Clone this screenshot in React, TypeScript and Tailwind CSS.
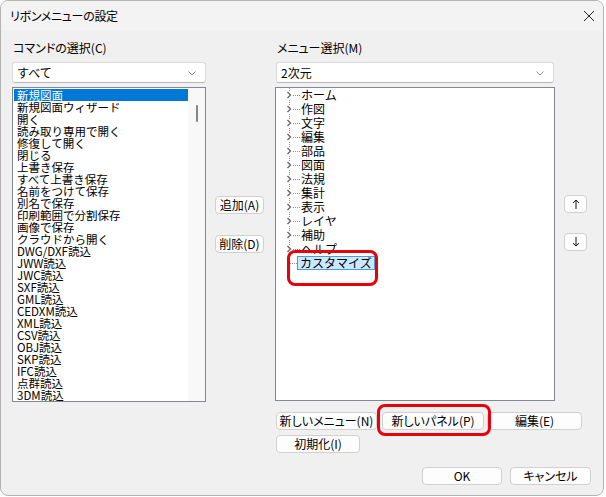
import React from 'react';

const commands = [
  '新規図面', '新規図面ウィザード', '開く', '読み取り専用で開く', '修復して開く', '閉じる', '上書き保存',
  'すべて上書き保存', '名前をつけて保存', '別名で保存', '印刷範囲で分割保存', '画像で保存', 'クラウドから開く',
  'DWG/DXF読込', 'JWW読込', 'JWC読込', 'SXF読込', 'GML読込', 'CEDXM読込', 'XML読込', 'CSV読込', 'OBJ読込',
  'SKP読込', 'IFC読込', '点群読込', '3DM読込',
];

const menus = ['ホーム', '作図', '文字', '編集', '部品', '図面', '法規', '集計', '表示', 'レイヤ', '補助', 'ヘルプ'];

function Chevron() {
  return (
    <svg width="8" height="5" viewBox="0 0 8 5" className="mr-[4px] mt-[1px] shrink-0">
      <path d="M0.5 0.5 L4 4 L7.5 0.5" fill="none" stroke="#808080" strokeWidth="0.9" />
    </svg>
  );
}

function Combo({ value, width }: { value: string; width: string }) {
  return (
    <div className={`${width} h-[21px] bg-white border border-[#dadada] border-b-[#b8b8b8] rounded-[3px] flex items-center justify-between pl-[4px] pr-[5px]`}>
      <span className="text-[12px] leading-[14px]">{value}</span>
      <Chevron />
    </div>
  );
}

function Btn({ children, className = '' }: { children: React.ReactNode; className?: string }) {
  return (
    <div className={`h-[18px] bg-[#fdfdfd] border border-[#d0d0d0] rounded-[4px] flex items-center justify-center text-[12px] leading-[14px] text-black ${className}`}>
      {children}
    </div>
  );
}

function TreeRow({ label }: { label: string }) {
  return (
    <div className="h-[14px] flex items-center">
      <svg width="25" height="14" viewBox="0 0 25 14" className="shrink-0">
        <line x1="13.5" y1="0" x2="13.5" y2="14" stroke="#909090" strokeWidth="1" strokeDasharray="1 1" />
        <line x1="17" y1="7.5" x2="24" y2="7.5" stroke="#909090" strokeWidth="1" strokeDasharray="1 1" />
        <rect x="10" y="3" width="6" height="8" fill="#fff" />
        <path d="M11.5 4 L14.5 7 L11.5 10" fill="none" stroke="#6a6a6a" strokeWidth="1.4" />
      </svg>
      <span className="text-[12px] leading-[14px] whitespace-nowrap">{label}</span>
    </div>
  );
}

function Arrow({ up }: { up: boolean }) {
  return (
    <svg width="8" height="10" viewBox="0 0 8 10">
      {up ? (
        <path d="M4 1 V10 M1 4 L4 1 L7 4" fill="none" stroke="#111" strokeWidth="1" />
      ) : (
        <path d="M4 0 V9 M1 6 L4 9 L7 6" fill="none" stroke="#111" strokeWidth="1" />
      )}
    </svg>
  );
}

export default function App() {
  return (
    <div className="w-[606px] h-[497px] bg-white font-['Noto_Sans_CJK_JP',sans-serif] text-black">
      <div className="w-[604px] h-[496px] bg-[#f0f0f0] border border-[#b4b4b4] rounded-[8px] overflow-hidden flex flex-col">
        {/* title bar */}
        <div className="h-[30px] shrink-0 bg-[#f3f3f3] flex items-center justify-between pl-[9px] pr-[8px]">
          <span className="text-[12px] leading-[14px] [font-feature-settings:'palt'] tracking-[-0.3px]">リボンメニューの設定</span>
          <svg width="12" height="12" viewBox="0 0 12 12">
            <path d="M1 1 L11 11 M11 1 L1 11" stroke="#222" strokeWidth="1" />
          </svg>
        </div>

        {/* main row */}
        <div className="flex pl-[11px] pt-[9px]">
          {/* commands */}
          <div className="w-[194px] flex flex-col">
            <div className="h-[15px] text-[12px] leading-[15px] pl-[1px] [font-feature-settings:'palt']">コマンドの選択(C)</div>
            <div className="mt-[7px]">
              <Combo value="すべて" width="w-[194px]" />
            </div>
            <div className="mt-[4px] h-[315px] bg-white border border-[#828790] flex">
              <div className="flex-1 pl-[1px] pt-[1px]">
                {commands.map((c, i) => (
                  <div
                    key={c}
                    className={`h-[12px] text-[11.5px] leading-[12px] pl-[3px] whitespace-nowrap ${i === 0 ? 'bg-[#0078d7] text-white' : ''}`}
                  >
                    {c}
                  </div>
                ))}
              </div>
              <div className="w-[17px] bg-[#f8f8f8] flex justify-center pt-[17px]">
                <div className="w-[2px] h-[17px] bg-[#858585] rounded-full" />
              </div>
            </div>
          </div>

          {/* add / remove */}
          <div className="w-[69px] pl-[9px] pt-[156px] flex flex-col">
            <Btn className="w-[49px]">追加(A)</Btn>
            <Btn className="w-[49px] mt-[21px]">削除(D)</Btn>
          </div>

          {/* menu tree */}
          <div className="w-[280px] flex flex-col">
            <div className="h-[15px] text-[12px] leading-[15px] pl-[2px] [font-feature-settings:'palt']">メニュー選択(M)</div>
            <div className="mt-[7px] pl-[1px]">
              <Combo value="2次元" width="w-[278px]" />
            </div>
            <div className="mt-[4px] h-[314px] bg-white border border-[#828790] relative">
              {menus.map(m => (
                <TreeRow key={m} label={m} />
              ))}
              <div className="h-[14px] flex items-center">
                <svg width="21" height="14" viewBox="0 0 21 14" className="shrink-0">
                  <line x1="13.5" y1="0" x2="13.5" y2="7" stroke="#909090" strokeWidth="1" strokeDasharray="1 1" />
                  <line x1="14" y1="7.5" x2="21" y2="7.5" stroke="#909090" strokeWidth="1" strokeDasharray="1 1" />
                </svg>
                <span className="h-[14px] text-[12px] leading-[12px] px-[2px] bg-[#cce8ff] border border-[#4a9ee0] whitespace-nowrap">
                  カスタマイズ
                </span>
              </div>
              <div className="absolute left-[11px] top-[162px] w-[91px] h-[36px] border-[3px] border-[#e8000b] rounded-[8px]" />
            </div>
          </div>

          {/* up / down */}
          <div className="pl-[9px] pt-[155px] flex flex-col">
            <Btn className="w-[23px]"><Arrow up /></Btn>
            <Btn className="w-[23px] mt-[20px]"><Arrow up={false} /></Btn>
          </div>
        </div>

        {/* bottom buttons */}
        <div className="pl-[275px] mt-[10px] flex flex-col">
          <div className="flex">
            <Btn className="w-[101px] [font-feature-settings:'palt']">新しいメニュー(N)</Btn>
            <div className="relative ml-[5px]">
              <Btn className="w-[102px] [font-feature-settings:'palt']">新しいパネル(P)</Btn>
              <div className="absolute -left-[5px] -top-[8px] w-[114px] h-[32px] border-[3px] border-[#e8000b] rounded-[8px]" />
            </div>
            <Btn className="w-[95px] ml-[3px]">編集(E)</Btn>
          </div>
          <Btn className="w-[84px] mt-[5px]">初期化(I)</Btn>
          <div className="flex mt-[14px] pl-[146px]">
            <Btn className="w-[80px] border-[#0067c0]">OK</Btn>
            <Btn className="w-[81px] ml-[8px] [font-feature-settings:'palt']">キャンセル</Btn>
          </div>
        </div>
      </div>
    </div>
  );
}
